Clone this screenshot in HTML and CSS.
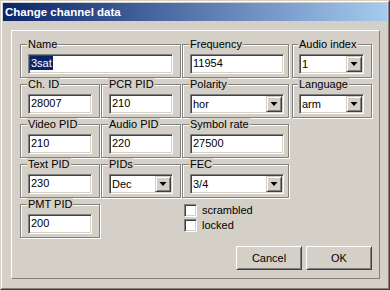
FILE: index.html
```html
<!doctype html>
<html lang="en">
  <head>
    <meta charset="UTF-8" />
    <title>Change channel data</title>
    <link rel="stylesheet" href="styles.css">
  </head>
  <body>
    <div class="window">
      <div class="frame">
        <div class="titlebar">Change channel data</div>

        <div class="dialog">
          <div class="panel">
            <div class="fields">
              <div class="group col-ab">
                <span class="legend">Name</span>
                <div class="edit"><span class="selected">3sat</span></div>
              </div>
              <div class="group col-c">
                <span class="legend">Frequency</span>
                <div class="edit">11954</div>
              </div>
              <div class="group col-d">
                <span class="legend">Audio index</span>
                <div class="edit combo">1<span class="drop"></span></div>
              </div>

              <div class="group col-a">
                <span class="legend">Ch. ID</span>
                <div class="edit">28007</div>
              </div>
              <div class="group col-b">
                <span class="legend">PCR PID</span>
                <div class="edit">210</div>
              </div>
              <div class="group col-c">
                <span class="legend">Polarity</span>
                <div class="edit combo">hor<span class="drop"></span></div>
              </div>
              <div class="group col-d">
                <span class="legend">Language</span>
                <div class="edit combo">arm<span class="drop"></span></div>
              </div>

              <div class="group col-a">
                <span class="legend">Video PID</span>
                <div class="edit">210</div>
              </div>
              <div class="group col-b">
                <span class="legend">Audio PID</span>
                <div class="edit">220</div>
              </div>
              <div class="group col-c">
                <span class="legend">Symbol rate</span>
                <div class="edit">27500</div>
              </div>

              <div class="group col-a">
                <span class="legend">Text PID</span>
                <div class="edit">230</div>
              </div>
              <div class="group col-b">
                <span class="legend">PIDs</span>
                <div class="edit combo">Dec<span class="drop"></span></div>
              </div>
              <div class="group col-c">
                <span class="legend">FEC</span>
                <div class="edit combo">3/4<span class="drop"></span></div>
              </div>

              <div class="group col-a">
                <span class="legend">PMT PID</span>
                <div class="edit">200</div>
              </div>
              <div class="checks col-cd">
                <label class="check"><span class="box"></span>scrambled</label>
                <label class="check"><span class="box"></span>locked</label>
              </div>
            </div>

            <div class="buttons">
              <button class="btn">Cancel</button>
              <button class="btn">OK</button>
            </div>
          </div>
        </div>
      </div>
    </div>
  </body>
</html>
```

FILE: styles.css
```css
:root {
  font-family: "Liberation Sans", Arial, sans-serif;
  font-size: 11px;
  color: #000;
  background-color: #d4d0c8;
}

body {
  margin: 0;
}

.window {
  width: 390px;
  height: 290px;
  box-sizing: border-box;
  border: 1px solid;
  border-color: #d4d0c8 #404040 #404040 #d4d0c8;
  display: flex;
}

.frame {
  flex: 1;
  display: flex;
  flex-direction: column;
  padding: 1px;
  border: 1px solid;
  border-color: #fff #808080 #808080 #fff;
}

.titlebar {
  height: 18px;
  line-height: 18px;
  padding-left: 2px;
  background: linear-gradient(to right, #0a246a, #a6caf0);
  color: #fff;
  font-size: 11.5px;
  font-weight: bold;
}

.dialog {
  flex: 1;
  display: flex;
  padding: 9px 7px 8px 8px;
}

.panel {
  flex: 1;
  display: flex;
  flex-direction: column;
  padding: 13px 7px 0 8px;
  border: 1px solid;
  border-color: #fff #808080 #808080 #fff;
}

/* group boxes on a grid: A | B | C | D */
.fields {
  display: grid;
  grid-template-columns: 80px 1px 80px 1px 107px 3px 80px;
  grid-auto-rows: 34px;
  row-gap: 6px;
}

.col-a { grid-column: 1 / 2; }
.col-b { grid-column: 3 / 4; }
.col-ab { grid-column: 1 / 4; }
.col-c { grid-column: 5 / 6; }
.col-d { grid-column: 7 / 8; }
.col-cd { grid-column: 5 / 8; }

.group {
  display: flex;
  flex-direction: column;
  align-items: stretch;
  padding: 0 7px 3px 7px;
  border: 1px solid #808080;
  box-shadow: inset 1px 1px #fff, 1px 1px #fff;
}

.group.col-c {
  padding-right: 4px;
}

.group.col-d {
  padding-left: 6px;
}

.legend {
  align-self: flex-start;
  margin: -7px 0 0 -1px;
  padding: 0 1px;
  line-height: 13px;
  background: #d4d0c8;
}

.edit {
  position: relative;
  height: 20px;
  box-sizing: border-box;
  margin-top: 3px;
  padding: 0 2px;
  line-height: 16px;
  background: #fff;
  border: 1px solid;
  border-color: #808080 #fff #fff #808080;
  box-shadow: inset 1px 1px #404040, inset -1px -1px #d4d0c8;
  white-space: nowrap;
}

.selected {
  display: inline-block;
  line-height: 14px;
  padding: 0 1px;
  margin-left: -1px;
  background: #0a246a;
  color: #fff;
}

.combo {
  display: flex;
  align-items: center;
}

.drop {
  position: absolute;
  top: 1px;
  right: 1px;
  width: 16px;
  height: 16px;
  box-sizing: border-box;
  background: #d4d0c8;
  border: 1px solid;
  border-color: #d4d0c8 #404040 #404040 #d4d0c8;
  box-shadow: inset 1px 1px #fff, inset -1px -1px #808080;
}

.drop::after {
  content: "";
  position: absolute;
  left: 3px;
  top: 5px;
  border-style: solid;
  border-width: 4px 4px 0 4px;
  border-color: #000 transparent transparent transparent;
  transform: scaleX(0.875);
}

.checks {
  display: flex;
  flex-direction: column;
  gap: 2px;
  padding-left: 2px;
}

.check {
  display: flex;
  align-items: center;
  gap: 5px;
  height: 13px;
  line-height: 13px;
}

.box {
  width: 13px;
  height: 13px;
  box-sizing: border-box;
  background: #fff;
  border: 1px solid;
  border-color: #808080 #fff #fff #808080;
  box-shadow: inset 1px 1px #404040, inset -1px -1px #d4d0c8;
}

.buttons {
  display: flex;
  justify-content: flex-end;
  gap: 4px;
  margin-top: 8px;
}

.btn {
  width: 66px;
  height: 24px;
  box-sizing: border-box;
  padding: 0;
  font: inherit;
  line-height: 20px;
  color: #000;
  background: #d4d0c8;
  border: 1px solid;
  border-color: #fff #404040 #404040 #fff;
  box-shadow: inset 1px 1px #d4d0c8, inset -1px -1px #808080;
}
```
